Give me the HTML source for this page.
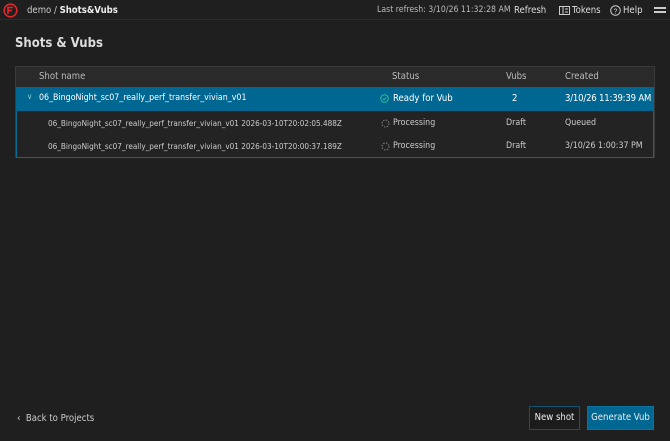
<!DOCTYPE html>
<html><head><style>
*{margin:0;padding:0;box-sizing:border-box}
body{width:670px;height:441px;background:#1f1f1f;color:#ddd;font-family:"DejaVu Sans Condensed","Liberation Sans Narrow","Liberation Sans",sans-serif;font-size:9.5px;position:relative;overflow:hidden}
.a{position:absolute;white-space:nowrap}
.hdr{position:absolute;left:0;top:0;width:670px;height:20px;border-bottom:1px solid #2c2c2c}
.tbl{position:absolute;left:15px;top:66px;width:640px;height:92px;border:1px solid #3a3a3a;background:#232323}
.th{position:absolute;left:0;top:0;width:638px;height:20px;background:#2a2a2a;color:#bbb}
.sel{position:absolute;left:0;top:20px;width:638px;height:24px;background:#006792;color:#fff;font-size:9.5px}
.sub{position:absolute;left:0;top:44px;width:638px;height:47px;border:1px solid #0b6a93;border-top:none;background:#232323;color:#ccc;font-size:8.8px}
.btn{position:absolute;top:406px;height:24px;line-height:22px;text-align:center;font-size:9.5px;color:#eee}
</style></head><body>
<div class="hdr">
<svg class="a" style="left:3px;top:3px" width="15" height="15" viewBox="0 0 15 15"><circle cx="7.5" cy="7.5" r="6.3" fill="none" stroke="#e3262b" stroke-width="1.6"/><path d="M5 11V4.5h5M5 7.5h4" fill="none" stroke="#e3262b" stroke-width="1.6"/></svg>
<div class="a" style="left:27px;top:5px;color:#ccc">demo / <b style="color:#eee">Shots&amp;Vubs</b></div>
<div class="a" style="left:377px;top:5px;color:#bbb;font-size:8.7px">Last refresh: 3/10/26 11:32:28 AM</div>
<div class="a" style="left:514px;top:5px;color:#ddd">Refresh</div>
<svg class="a" style="left:559px;top:6px" width="11" height="9" viewBox="0 0 11 9"><rect x="0.5" y="0.5" width="10" height="8" fill="none" stroke="#ccc"/><path d="M4 1v7M6 3h3M6 6h3" stroke="#ccc"/></svg>
<div class="a" style="left:572px;top:5px;color:#ddd">Tokens</div>
<svg class="a" style="left:610px;top:5px" width="11" height="11" viewBox="0 0 11 11"><circle cx="5.5" cy="5.5" r="4.8" fill="none" stroke="#ccc"/><text x="5.5" y="8.3" font-size="7" text-anchor="middle" fill="#ccc" font-family="Liberation Sans">?</text></svg>
<div class="a" style="left:623px;top:5px;color:#ddd">Help</div>
<div class="a" style="left:654px;top:7px;width:12px;height:2px;background:#ccc"></div>
<div class="a" style="left:654px;top:11px;width:12px;height:2px;background:#ccc"></div>
</div>
<div class="a" style="left:15px;top:36px;font-size:13px;font-weight:bold;color:#ddd">Shots &amp; Vubs</div>
<div class="tbl">
<div class="th">
<div class="a" style="left:23px;top:4px">Shot name</div>
<div class="a" style="left:376px;top:4px">Status</div>
<div class="a" style="left:490px;top:4px">Vubs</div>
<div class="a" style="left:549px;top:4px">Created</div>
</div>
<div class="sel">
<div class="a" style="left:11px;top:5px;color:#8cc;font-size:8px">&#x2228;</div>
<div class="a" style="left:23px;top:6px;font-size:8.8px">06_BingoNight_sc07_really_perf_transfer_vivian_v01</div>
<svg class="a" style="left:364px;top:7px" width="9" height="9" viewBox="0 0 9 9"><circle cx="4.5" cy="4.5" r="3.8" fill="none" stroke="#2fc28a"/><path d="M2.8 4.6l1.2 1.2 2.2-2.3" fill="none" stroke="#2fc28a"/></svg>
<div class="a" style="left:377px;top:6px">Ready for Vub</div>
<div class="a" style="left:496px;top:6px">2</div>
<div class="a" style="left:549px;top:6px;letter-spacing:-0.2px">3/10/26 11:39:39 AM</div>
</div>
<div class="sub">
<div class="a" style="left:31px;top:7px;font-size:8.1px">06_BingoNight_sc07_really_perf_transfer_vivian_v01 2026-03-10T20:02:05.488Z</div>
<svg class="a" style="left:364px;top:8px" width="9" height="9" viewBox="0 0 9 9"><circle cx="4.5" cy="4.5" r="3.5" fill="none" stroke="#888" stroke-dasharray="1.4 1.4"/></svg>
<div class="a" style="left:376px;top:7px">Processing</div>
<div class="a" style="left:489px;top:7px">Draft</div>
<div class="a" style="left:548px;top:7px">Queued</div>
<div class="a" style="left:31px;top:30px;font-size:8.1px">06_BingoNight_sc07_really_perf_transfer_vivian_v01 2026-03-10T20:00:37.189Z</div>
<svg class="a" style="left:364px;top:31px" width="9" height="9" viewBox="0 0 9 9"><circle cx="4.5" cy="4.5" r="3.5" fill="none" stroke="#888" stroke-dasharray="1.4 1.4"/></svg>
<div class="a" style="left:376px;top:30px">Processing</div>
<div class="a" style="left:489px;top:30px">Draft</div>
<div class="a" style="left:548px;top:30px">3/10/26 1:00:37 PM</div>
</div>
</div>
<div class="a" style="left:17px;top:413px;color:#ccc">&#x2039;&nbsp;&nbsp;Back to Projects</div>
<div class="btn" style="left:529px;width:51px;border:1px solid #0d5470;background:#1c1c1c">New shot</div>
<div class="btn" style="left:587px;width:67px;background:#006792;border:1px solid #0a73a0">Generate Vub</div>
</body></html>
